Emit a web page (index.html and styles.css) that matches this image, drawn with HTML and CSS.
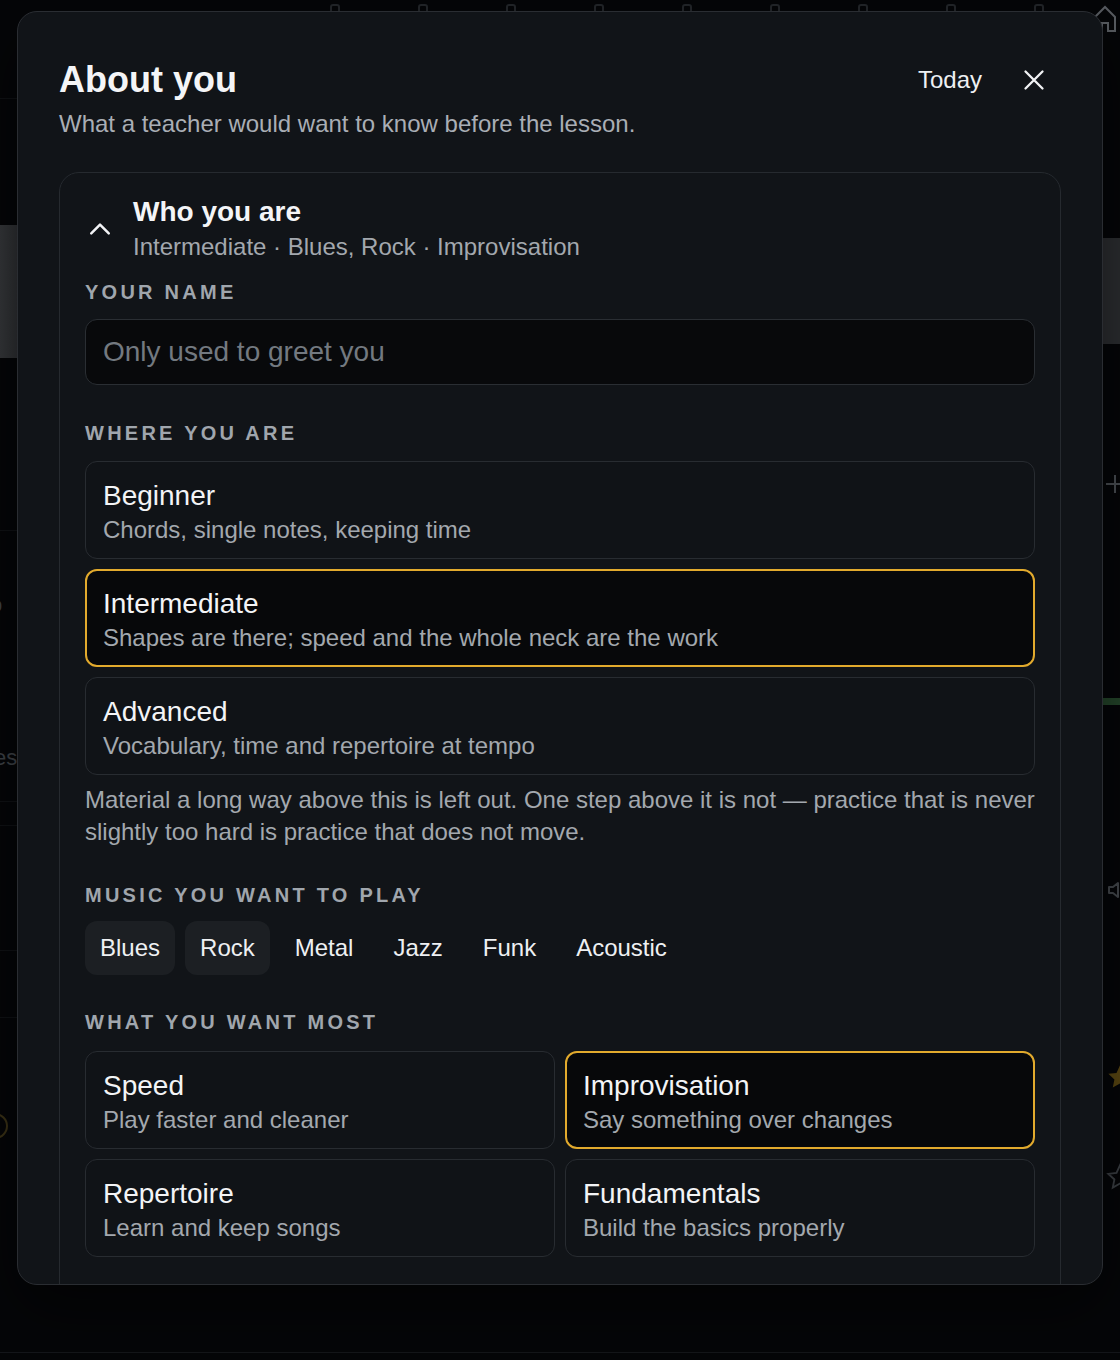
FILE: index.html
```html
<!DOCTYPE html>
<html lang="en">
<head>
<meta charset="utf-8">
<title>About you</title>
<link rel="stylesheet" href="styles.css">
</head>
<body>
<div class="backdrop" aria-hidden="true">
  <div class="bd-side bd-left">
    <div class="bd-rule bd-rule-top"></div>
    <div class="bd-block bd-block-left"></div>
    <div class="bd-rule bd-rule-a"></div>
    <div class="bd-text bd-text-o">o</div>
    <div class="bd-text bd-text-es">es</div>
    <div class="bd-rule bd-rule-b"></div>
    <div class="bd-rule bd-rule-c"></div>
    <div class="bd-rule bd-rule-d"></div>
    <div class="bd-rule bd-rule-e"></div>
    <div class="bd-ring"></div>
  </div>
  <div class="bd-center">
    <div class="bd-topicons">
      <span class="bd-dot"></span>
      <span class="bd-dot"></span>
      <span class="bd-dot"></span>
      <span class="bd-dot"></span>
      <span class="bd-dot"></span>
      <span class="bd-dot"></span>
      <span class="bd-dot"></span>
      <span class="bd-dot"></span>
      <span class="bd-dot"></span>
    </div>
  </div>
  <div class="bd-side bd-right">
    <svg class="bd-house" width="24" height="28" viewBox="0 0 24 28" fill="none" stroke="#5a5e63" stroke-width="2"><path d="M2 12L12 2l10 10v14H15v-8H9v8H2z"/></svg>
    <div class="bd-block bd-block-right"></div>
    <svg class="bd-plus" width="20" height="20" viewBox="0 0 20 20" fill="none" stroke="#4a4e53" stroke-width="2"><path d="M10 1v18M1 10h18"/></svg>
    <div class="bd-green"></div>
    <svg class="bd-speaker" width="24" height="24" viewBox="0 0 24 24" fill="none" stroke="#44484d" stroke-width="2" stroke-linejoin="round"><path d="M3 9h4l5-4v14l-5-4H3z"/><path d="M16 9l5 6M21 9l-5 6"/></svg>
    <svg class="bd-star" width="28" height="28" viewBox="0 0 24 24" fill="#5a4712"><path d="M12 2l3 6.5 7 .8-5.2 4.8 1.4 7L12 17.6 5.8 21.1l1.4-7L2 9.3l7-.8z"/></svg>
    <svg class="bd-star bd-star-line" width="28" height="28" viewBox="0 0 24 24" fill="none" stroke="#3b3f44" stroke-width="1.6"><path d="M12 2l3 6.5 7 .8-5.2 4.8 1.4 7L12 17.6 5.8 21.1l1.4-7L2 9.3l7-.8z"/></svg>
  </div>
</div>

<section class="modal" role="dialog" aria-labelledby="modal-title">
  <header class="modal-head">
    <div class="modal-heading">
      <h1 class="modal-title" id="modal-title">About you</h1>
      <p class="modal-sub">What a teacher would want to know before the lesson.</p>
    </div>
    <div class="head-actions">
      <button class="today" type="button">Today</button>
      <button class="close" type="button" aria-label="Close">
        <svg width="24" height="24" viewBox="0 0 24 24" fill="none" stroke="currentColor" stroke-width="2.3" stroke-linecap="round"><path d="M3.5 3.5l17 17M20.5 3.5l-17 17"/></svg>
      </button>
    </div>
  </header>

  <div class="profile">
    <div class="profile-head">
      <span class="chev">
        <svg width="30" height="30" viewBox="0 0 24 24" fill="none" stroke="currentColor" stroke-width="2" stroke-linecap="round" stroke-linejoin="round"><path d="M5 15.5l7-7 7 7"/></svg>
      </span>
      <div class="profile-head-text">
        <div class="profile-title">Who you are</div>
        <div class="profile-summary">Intermediate · Blues, Rock · Improvisation</div>
      </div>
    </div>

    <div class="section section-name">
      <div class="label">Your name</div>
      <input class="name-input" type="text" placeholder="Only used to greet you">
    </div>

    <div class="section section-level">
      <div class="label">Where you are</div>
      <div class="options">
        <div class="option">
          <div class="option-title">Beginner</div>
          <div class="option-desc">Chords, single notes, keeping time</div>
        </div>
        <div class="option is-selected">
          <div class="option-title">Intermediate</div>
          <div class="option-desc">Shapes are there; speed and the whole neck are the work</div>
        </div>
        <div class="option">
          <div class="option-title">Advanced</div>
          <div class="option-desc">Vocabulary, time and repertoire at tempo</div>
        </div>
      </div>
      <p class="level-note">Material a long way above this is left out. One step above it is not — practice that is never slightly too hard is practice that does not move.</p>
    </div>

    <div class="section section-music">
      <div class="label">Music you want to play</div>
      <div class="chips">
        <button class="chip is-on" type="button">Blues</button>
        <button class="chip is-on" type="button">Rock</button>
        <button class="chip" type="button">Metal</button>
        <button class="chip" type="button">Jazz</button>
        <button class="chip" type="button">Funk</button>
        <button class="chip" type="button">Acoustic</button>
      </div>
    </div>

    <div class="section section-goals">
      <div class="label">What you want most</div>
      <div class="goals">
        <div class="option">
          <div class="option-title">Speed</div>
          <div class="option-desc">Play faster and cleaner</div>
        </div>
        <div class="option is-selected">
          <div class="option-title">Improvisation</div>
          <div class="option-desc">Say something over changes</div>
        </div>
        <div class="option">
          <div class="option-title">Repertoire</div>
          <div class="option-desc">Learn and keep songs</div>
        </div>
        <div class="option">
          <div class="option-title">Fundamentals</div>
          <div class="option-desc">Build the basics properly</div>
        </div>
      </div>
    </div>
  </div>
</section>
</body>
</html>
```

FILE: styles.css
```css
* { box-sizing: border-box; }

html, body { margin: 0; padding: 0; }

body {
  width: 1120px;
  height: 1360px;
  overflow: hidden;
  position: relative;
  background: #050608;
  font-family: "Liberation Sans", Arial, sans-serif;
  color: #f2f3f5;
}

/* ---------- dimmed page behind the dialog ---------- */
.backdrop {
  display: flex;
  justify-content: space-between;
  height: 1353px;
  border-bottom: 1px solid #14161a;
}

.bd-side {
  width: 40px;
  flex: none;
  display: flex;
  flex-direction: column;
  overflow: hidden;
}

.bd-center {
  flex: 1;
  overflow: hidden;
}

.bd-topicons {
  display: flex;
  gap: 78px;
  padding-left: 290px;
  margin-top: 4px;
}

.bd-dot {
  width: 10px;
  height: 10px;
  border: 2px solid #24272b;
  border-radius: 3px;
}

.bd-rule { height: 1px; background: #101215; }
.bd-rule-top { margin-top: 98px; }
.bd-block { height: 133px; }
.bd-block-left {
  margin-top: 126px;
  background: linear-gradient(90deg, #36383b, #26282b);
}
.bd-rule-a { margin-top: 172px; }
.bd-text {
  color: #3f4348;
  font-size: 22px;
  line-height: 26px;
}
.bd-text-o { margin-top: 61px; margin-left: -10px; }
.bd-text-es { margin-top: 127px; margin-left: -6px; }
.bd-rule-b { margin-top: 30px; }
.bd-rule-c { margin-top: 23px; }
.bd-rule-d { margin-top: 124px; }
.bd-rule-e { margin-top: 66px; }
.bd-ring {
  margin-top: 95px;
  margin-left: -18px;
  width: 26px;
  height: 26px;
  border: 2px solid #3b3216;
  border-radius: 50%;
}

.bd-house { margin: 5px 0 0 13px; flex: none; }
.bd-block-right {
  margin-top: 205px;
  height: 106px;
  background: #2c2e31;
}
.bd-plus { margin: 130px 0 0 25px; flex: none; }
.bd-green {
  margin-top: 204px;
  height: 7px;
  background: #24452a;
}
.bd-speaker { margin: 173px 0 0 26px; flex: none; }
.bd-star { margin: 161px 0 0 26px; flex: none; }
.bd-star-line { margin-top: 72px; }

/* ---------- dialog ---------- */
.modal {
  position: absolute;
  left: 17px;
  top: 11px;
  width: 1086px;
  height: 1274px;
  padding: 46px 41px 0;
  background: #111418;
  border: 1px solid #2a2d32;
  border-radius: 20px;
  overflow: hidden;
  box-shadow: 0 24px 64px rgba(0, 0, 0, 0.55);
}

.modal-head {
  display: flex;
  justify-content: space-between;
  align-items: flex-start;
}

.modal-title {
  margin: 0;
  font-size: 36px;
  line-height: 43px;
  font-weight: 700;
  color: #f4f5f7;
}

.modal-sub {
  margin: 7px 0 0;
  font-size: 24px;
  line-height: 31px;
  color: #a9aeb5;
}

.head-actions {
  display: flex;
  align-items: center;
  height: 43px;
  margin-right: 7px;
}

.today {
  margin-right: 32px;
  padding: 0;
  border: 0;
  background: none;
  font-family: inherit;
  font-size: 24px;
  line-height: 30px;
  color: #eef0f2;
}

.close {
  width: 40px;
  height: 40px;
  display: flex;
  align-items: center;
  justify-content: center;
  padding: 0;
  border: 0;
  background: none;
  color: #f2f3f5;
}

/* ---------- profile card ---------- */
.profile {
  margin-top: 33px;
  padding: 22px 25px 80px;
  border: 1px solid #262a2f;
  border-radius: 20px;
  background: #111418;
}

.profile-head {
  display: flex;
  align-items: center;
  gap: 18px;
}

.chev {
  width: 30px;
  height: 30px;
  display: flex;
  align-items: center;
  justify-content: center;
  color: #f2f3f5;
}

.profile-title {
  font-size: 28px;
  line-height: 34px;
  font-weight: 700;
  color: #f4f5f7;
}

.profile-summary {
  margin-top: 2px;
  font-size: 24px;
  line-height: 31px;
  color: #a3a8ae;
}

.section { margin-top: 35px; }
.section-name { margin-top: 18px; }
.section-level { margin-top: 36px; }

.label {
  margin-bottom: 16px;
  font-size: 20px;
  line-height: 24px;
  font-weight: 700;
  letter-spacing: 3.25px;
  text-transform: uppercase;
  color: #a0a6ad;
}

.section-name .label { margin-bottom: 15px; }
.section-music .label { margin-bottom: 14px; }
.section-goals .label { margin-bottom: 17px; }

.name-input {
  display: block;
  width: 100%;
  height: 66px;
  padding: 0 17px;
  border: 1px solid #2a2e33;
  border-radius: 12px;
  background: #08090b;
  font-family: inherit;
  font-size: 28px;
  color: #f2f3f5;
  outline: none;
}

.name-input::placeholder { color: #737980; }

.options {
  display: flex;
  flex-direction: column;
  gap: 10px;
}

.option {
  height: 98px;
  padding: 17px 17px 0;
  display: flex;
  flex-direction: column;
  gap: 1px;
  border: 1px solid #282c31;
  border-radius: 12px;
  background: #101317;
}

.option.is-selected {
  padding: 16px 16px 0;
  border: 2px solid #e2aa2d;
  background: #07080a;
}

.option-title {
  font-size: 28px;
  line-height: 34px;
  color: #f3f4f6;
}

.option-desc {
  font-size: 24px;
  line-height: 31px;
  color: #a3a8ae;
}

.level-note {
  margin: 9px 0 0;
  font-size: 24px;
  line-height: 32px;
  color: #a3a8ae;
}

.chips {
  display: flex;
  gap: 10px;
}

.chip {
  height: 54px;
  padding: 0 15px;
  display: flex;
  align-items: center;
  border: 0;
  border-radius: 12px;
  background: transparent;
  font-family: inherit;
  font-size: 24px;
  color: #eef0f2;
}

.chip.is-on { background: #1c1f23; }

.goals {
  display: grid;
  grid-template-columns: 1fr 1fr;
  gap: 10px;
}
```
